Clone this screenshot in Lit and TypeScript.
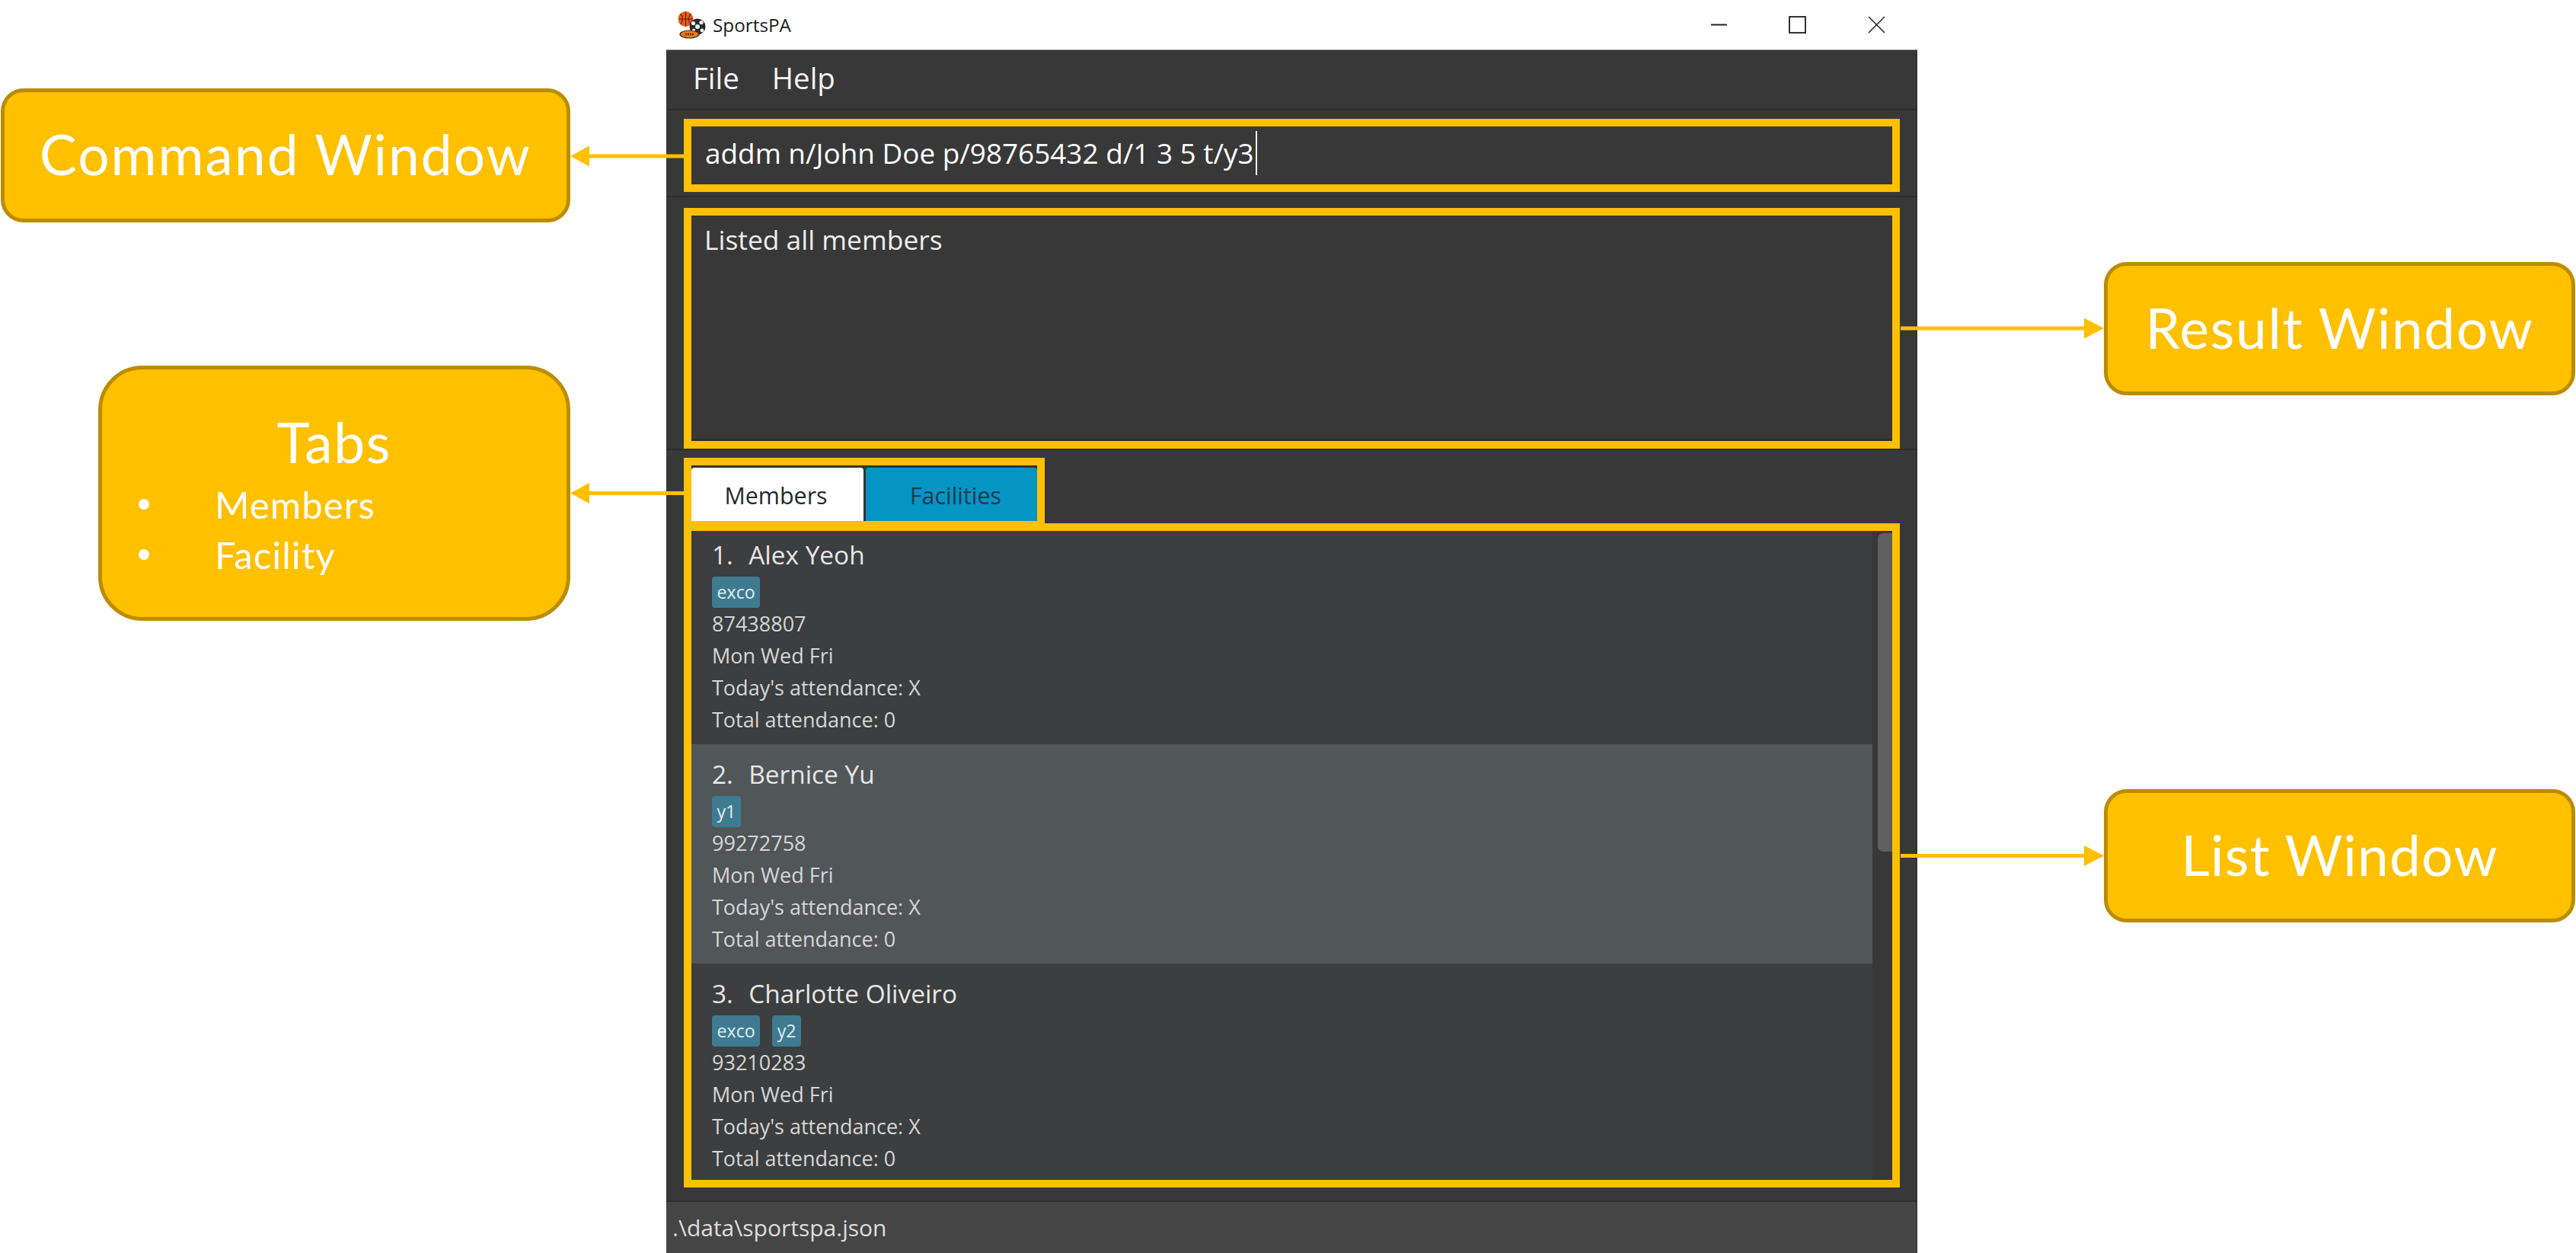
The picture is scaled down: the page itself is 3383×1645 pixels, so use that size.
import { LitElement, css, html, svg } from 'lit'
import { customElement, property } from 'lit/decorators.js'

const MEMBERS = [
  { name: 'Alex Yeoh', tags: ['exco'], phone: '87438807' },
  { name: 'Bernice Yu', tags: ['y1'], phone: '99272758' },
  { name: 'Charlotte Oliveiro', tags: ['exco', 'y2'], phone: '93210283' },
]

@customElement('member-row')
export class MemberRow extends LitElement {
  @property({ type: Number }) index = 1
  @property({ type: String }) name = ''
  @property({ type: String }) phone = ''
  @property({ type: Array }) tags: string[] = []

  static styles = css`
    :host {
      display: block;
      box-sizing: border-box;
      height: 288px;
      padding: 17px 0 11px 27px;
      background: #3c3e3f;
      font-family: 'Open Sans', sans-serif;
    }
    :host([selected]) {
      background: #515658;
    }
    .name {
      font-size: 33.4px;
      line-height: 44px;
      color: #e6e6e6;
      white-space: pre;
    }
    .num {
      margin-right: 3px;
    }
    .tags {
      display: flex;
      gap: 16px;
      margin-top: 7px;
    }
    .tag {
      height: 41px;
      padding: 0 6.5px;
      border-radius: 4px;
      background: #3e7b91;
      color: #e3edf1;
      font-size: 23.2px;
      line-height: 41px;
    }
    .line {
      font-size: 27px;
      line-height: 42px;
      color: #d6d6d6;
    }
  `

  render() {
    return html`
      <div class="name"><span class="num">${this.index}.  </span>${this.name}</div>
      <div class="tags">${this.tags.map((t) => html`<span class="tag">${t}</span>`)}</div>
      <div class="line">${this.phone}</div>
      <div class="line">Mon Wed Fri</div>
      <div class="line">Today's attendance: X</div>
      <div class="line">Total attendance: 0</div>
    `
  }
}

@customElement('app-root')
export class AppRoot extends LitElement {
  static styles = css`
    :host {
      display: grid;
      grid-template-columns: 875px 1643px 865px;
      position: relative;
      width: 3383px;
      height: 1645px;
      overflow: hidden;
      background: #fff;
      font-family: 'Open Sans', sans-serif;
    }
    .left {
      display: flex;
      flex-direction: column;
      align-items: flex-end;
      padding-right: 126px;
    }
    .right {
      display: flex;
      flex-direction: column;
      padding-left: 245px;
    }
    .callout {
      display: flex;
      align-items: center;
      justify-content: center;
      box-sizing: border-box;
      padding-bottom: 4px;
      border: 5px solid #bc8c00;
      background: #ffc000;
      color: #fff;
      font-family: Lato, sans-serif;
      font-size: 73px;
      letter-spacing: 1.7px;
    }
    .c-command {
      width: 748px;
      height: 176px;
      margin-top: 116px;
      border-radius: 30px;
      letter-spacing: 2px;
    }
    .c-tabs {
      display: block;
      width: 620px;
      height: 335px;
      margin-top: 188px;
      padding: 51px 0 0;
      border-radius: 58px;
    }
    .c-result {
      width: 619px;
      height: 175px;
      margin-top: 344px;
      border-radius: 30px;
    }
    .c-list {
      width: 619px;
      height: 175px;
      margin-top: 517px;
      border-radius: 30px;
      letter-spacing: 1.2px;
    }
    .tabs-title {
      line-height: 88px;
      text-align: center;
    }
    .tabs-items {
      margin-top: 5px;
      font-size: 49px;
      letter-spacing: 1.1px;
    }
    .tabs-item {
      display: flex;
      align-items: center;
      height: 66px;
      padding-left: 48px;
      gap: 86px;
    }
    .bullet {
      width: 14px;
      height: 14px;
      border-radius: 50%;
      background: #fff;
    }

    .window {
      display: flex;
      flex-direction: column;
      box-sizing: border-box;
      height: 1645px;
      background: #383838;
      border-right: 1px solid #2f2f2f;
    }
    .titlebar {
      display: flex;
      align-items: center;
      height: 65px;
      flex: none;
      margin-right: -1px;
      padding-left: 16px;
      background: #fff;
      color: #1c1c1c;
      font-size: 24.3px;
      border-bottom: 1px solid #8a8a8a;
    }
    .title-icon {
      width: 36px;
      height: 36px;
      margin-right: 9px;
    }
    .controls {
      display: flex;
      margin-left: auto;
      padding-right: 2px;
    }
    .control {
      display: flex;
      align-items: center;
      justify-content: center;
      width: 103.5px;
      height: 65px;
    }
    .control svg {
      width: 23px;
      height: 23px;
    }
    .menubar {
      display: flex;
      align-items: center;
      gap: 43px;
      flex: none;
      box-sizing: border-box;
      height: 79px;
      padding: 0 0 6px 35px;
      border-bottom: 2px solid #2d2d2d;
      color: #f4f4f4;
      font-size: 38.4px;
    }
    .pane {
      flex: none;
      box-sizing: border-box;
      padding: 0 22px 0 23px;
      border-bottom: 2px solid #2d2d2d;
    }
    .box {
      box-sizing: border-box;
      border: 10px solid #ffc000;
    }
    .pane-command {
      height: 114px;
      padding-top: 11px;
    }
    .command {
      display: flex;
      align-items: center;
      height: 96px;
      padding: 0 0 6px 18px;
      color: #fff;
      font-size: 36.9px;
      white-space: pre;
    }
    .caret {
      width: 2px;
      height: 58px;
      margin-left: 2px;
      background: #f4f4f4;
    }
    .pane-result {
      height: 332px;
      padding-top: 14px;
    }
    .result {
      height: 316px;
      padding: 7px 0 0 17px;
      color: #eeeeee;
      font-size: 35.4px;
      line-height: 48px;
      box-shadow: inset 0 -3px 0 #2f2f2f;
    }
    .pane-list {
      flex: 1;
      padding-top: 10px;
    }
    .tabs {
      display: flex;
      gap: 3px;
      box-sizing: border-box;
      width: 474px;
      height: 86px;
      padding-top: 3px;
      border-bottom-width: 3px;
      background: #333;
      font-size: 30.4px;
    }
    .tab {
      display: flex;
      align-items: center;
      justify-content: center;
      padding-top: 3px;
      box-sizing: border-box;
      border-radius: 4px 4px 0 0;
    }
    .tab-active {
      width: 226px;
      padding-right: 4px;
      background: #fff;
      color: #1f2a33;
    }
    .tab-idle {
      flex: 1;
      padding-left: 11px;
      background: #0595c5;
      color: #1e3b4d;
    }
    .list {
      display: flex;
      height: 872px;
    }
    .rows {
      flex: 1;
      height: 852px;
      overflow: hidden;
    }
    .rows-inner {
      margin-top: -8px;
    }
    .track {
      flex: none;
      box-sizing: border-box;
      width: 26px;
      padding: 3px 0 0 7px;
      background: #383838;
    }
    .thumb {
      width: 19px;
      height: 418px;
      border-radius: 7px 0 0 7px;
      background: #5f5f5f;
    }
    .status {
      display: flex;
      align-items: center;
      flex: none;
      height: 67px;
      padding-left: 8px;
      background: #454545;
      color: #dedede;
      font-size: 30px;
      white-space: pre;
    }

    .arrows {
      position: absolute;
      top: 0;
      left: 0;
      width: 3383px;
      height: 1645px;
      pointer-events: none;
    }
  `

  renderLogo() {
    return html`<svg class="title-icon" viewBox="0 0 36 36">
      <circle cx="9.5" cy="10" r="10" fill="#e8591c" />
      <path d="M0 10h19M9.5 0v20M2.5 3c4 4 4 10 0 14M16.5 3c-4 4-4 10 0 14" fill="none" stroke="#5a2410" stroke-width="1.1" />
      <circle cx="25" cy="20" r="10.5" fill="#2a2a2a" />
      <circle cx="25" cy="20" r="3" fill="#f2f2f2" />
      <circle cx="19.5" cy="15.5" r="2.6" fill="#f2f2f2" />
      <circle cx="30" cy="14.5" r="2.6" fill="#f2f2f2" />
      <circle cx="20" cy="25" r="2.2" fill="#f2f2f2" />
      <circle cx="31" cy="25" r="2.4" fill="#f2f2f2" />
      <ellipse cx="14.5" cy="30" rx="12.5" ry="5" fill="#e8791c" stroke="#3a2410" stroke-width="1.2" />
      <path d="M9 30h11" stroke="#5a3410" stroke-width="2.4" stroke-dasharray="2 1" />
    </svg>`
  }

  renderArrows() {
    const arrow = (x1: number, x2: number, y: number, tip: number, base: number) => svg`
      <line x1=${x1} x2=${x2} y1=${y} y2=${y} stroke="#ffc000" stroke-width="5" />
      <polygon points="${tip},${y} ${base},${y - 13.5} ${base},${y + 13.5}" fill="#ffc000" />`
    return html`<svg class="arrows" viewBox="0 0 3383 1645">
      ${arrow(774, 898, 205, 749, 774)} ${arrow(774, 898, 647.5, 749, 774)}
      ${arrow(2496, 2737, 431, 2763, 2737)} ${arrow(2496, 2737, 1123.5, 2763, 2737)}
    </svg>`
  }

  render() {
    return html`
      <div class="left">
        <div class="callout c-command">Command Window</div>
        <div class="callout c-tabs">
          <div class="tabs-title">Tabs</div>
          <div class="tabs-items">
            <div class="tabs-item"><span class="bullet"></span>Members</div>
            <div class="tabs-item"><span class="bullet"></span>Facility</div>
          </div>
        </div>
      </div>

      <div class="window">
        <div class="titlebar">
          ${this.renderLogo()}SportsPA
          <div class="controls">
            <div class="control">
              <svg viewBox="0 0 23 23"><path d="M1 11.5h21" stroke="#222" stroke-width="2" /></svg>
            </div>
            <div class="control">
              <svg viewBox="0 0 23 23"><rect x="1" y="1" width="21" height="21" fill="none" stroke="#333" stroke-width="2" /></svg>
            </div>
            <div class="control">
              <svg viewBox="0 0 23 23"><path d="M1 1l21 21M22 1L1 22" fill="none" stroke="#222" stroke-width="1.5" /></svg>
            </div>
          </div>
        </div>
        <div class="menubar"><span>File</span><span>Help</span></div>
        <div class="pane pane-command">
          <div class="box command">addm n/John Doe p/98765432 d/1 3 5 t/y3<span class="caret"></span></div>
        </div>
        <div class="pane pane-result">
          <div class="box result">Listed all members</div>
        </div>
        <div class="pane pane-list">
          <div class="box tabs">
            <div class="tab tab-active">Members</div>
            <div class="tab tab-idle">Facilities</div>
          </div>
          <div class="box list">
            <div class="rows">
              <div class="rows-inner">
                ${MEMBERS.map(
                  (m, i) => html`<member-row
                    .index=${i + 1}
                    .name=${m.name}
                    .phone=${m.phone}
                    .tags=${m.tags}
                    ?selected=${i === 1}
                  ></member-row>`
                )}
              </div>
            </div>
            <div class="track"><div class="thumb"></div></div>
          </div>
        </div>
        <div class="status">.\\data\\sportspa.json</div>
      </div>

      <div class="right">
        <div class="callout c-result">Result Window</div>
        <div class="callout c-list">List Window</div>
      </div>

      ${this.renderArrows()}
    `
  }
}

declare global {
  interface HTMLElementTagNameMap {
    'app-root': AppRoot
    'member-row': MemberRow
  }
}
